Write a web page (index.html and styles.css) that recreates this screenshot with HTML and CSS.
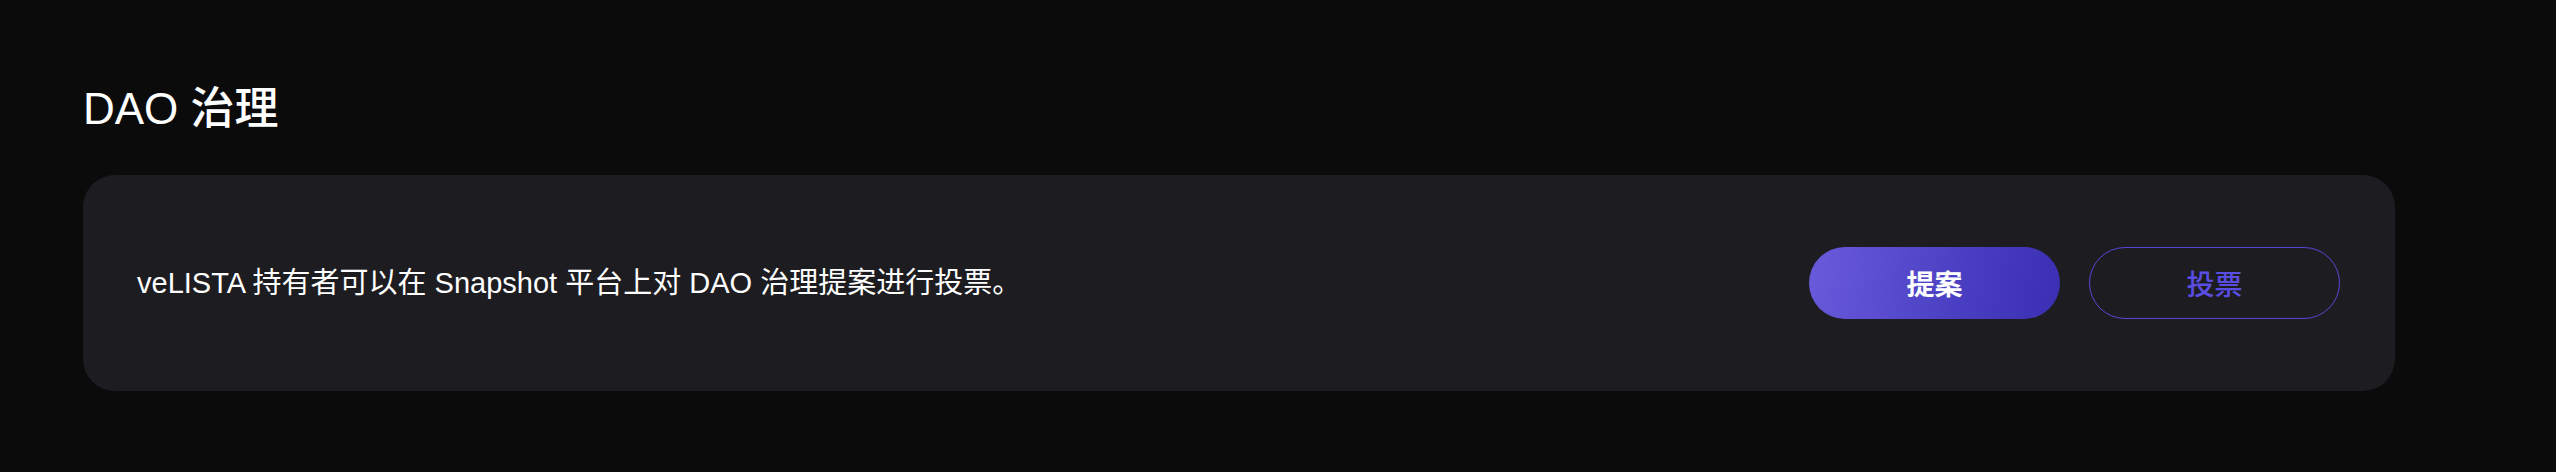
FILE: index.html
```html
<!DOCTYPE html>
<html lang="zh-CN">
<head>
    <meta charset="UTF-8">
    <meta name="viewport" content="width=device-width, initial-scale=1.0">
    <title>DAO 治理</title>
    <link rel="stylesheet" href="styles.css">
</head>
<body>
    <div class="page">
        <h2 class="section-title">DAO 治理</h2>
        <div class="gov-card">
            <p class="gov-text">veLISTA 持有者可以在 Snapshot 平台上对 DAO 治理提案进行投票。</p>
            <div class="gov-actions">
                <a class="btn btn-primary" href="#">提案</a>
                <a class="btn btn-outline" href="#">投票</a>
            </div>
        </div>
    </div>
</body>
</html>
```

FILE: styles.css
```css
* {
    margin: 0;
    padding: 0;
    box-sizing: border-box;
}

body {
    background: #0b0b0c;
    color: #fff;
    font-family: "Liberation Sans", "Noto Sans CJK SC", sans-serif;
}

.page {
    padding: 83px 161px 0 83px;
}

.section-title {
    font-size: 44px;
    line-height: 52px;
    font-weight: 500;
    margin-bottom: 40px;
}

.gov-card {
    display: flex;
    align-items: center;
    justify-content: space-between;
    height: 216px;
    padding: 0 55px 0 54px;
    background: #1d1d21;
    border-radius: 32px;
}

.gov-text {
    font-size: 29px;
    line-height: 36px;
    color: #fff;
}

.gov-actions {
    display: flex;
    gap: 29px;
}

.btn {
    display: flex;
    align-items: center;
    justify-content: center;
    width: 251px;
    height: 72px;
    border-radius: 36px;
    font-size: 28px;
    font-weight: 700;
    text-decoration: none;
}

.btn-primary {
    color: #fff;
    background: linear-gradient(100deg, #6a5bdc 0%, #4a3fc2 60%, #3a2fb2 100%);
}

.btn-outline {
    color: #5a4de2;
    border: 1.5px solid #5447d6;
    background: transparent;
    font-weight: 500;
}
```
